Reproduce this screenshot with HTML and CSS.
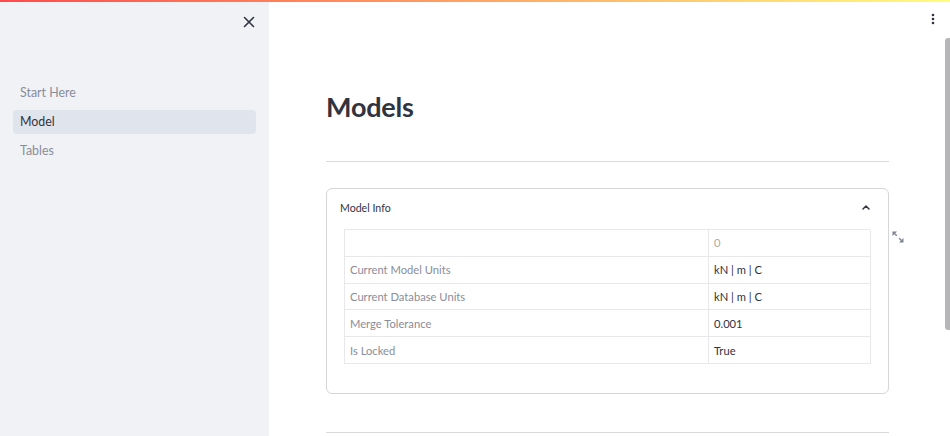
FILE: index.html
```html
<!DOCTYPE html>
<html>
<head>
<meta charset="utf-8">
<link rel="stylesheet" href="styles.css">
</head>
<body>
<div class="topbar"></div>
<div class="app">
  <aside class="sidebar">
    <div class="side-head">
      <svg class="close" width="12" height="12" viewBox="0 0 12 12"><path d="M1.5 1.5 L10.5 10.5 M10.5 1.5 L1.5 10.5" stroke="#31333f" stroke-width="1.6" stroke-linecap="round"/></svg>
    </div>
    <nav class="nav">
      <div class="nav-item">Start Here</div>
      <div class="nav-item active">Model</div>
      <div class="nav-item">Tables</div>
    </nav>
  </aside>
  <main class="main">
    <div class="menu-dots">
      <svg width="4" height="12" viewBox="0 0 4 12"><circle cx="2" cy="2" r="1.3" fill="#31333f"/><circle cx="2" cy="6" r="1.3" fill="#31333f"/><circle cx="2" cy="10" r="1.3" fill="#31333f"/></svg>
    </div>
    <div class="scrollbar"></div>
    <div class="content">
      <h1 class="title">Models</h1>
      <hr class="divider">
      <div class="expander">
        <div class="exp-head">
          <span class="exp-label">Model Info</span>
          <svg class="chev" width="10" height="7" viewBox="0 0 10 7"><path d="M2 5 L5 2 L8 5" stroke="#31333f" stroke-width="1.5" fill="none" stroke-linecap="round" stroke-linejoin="round"/></svg>
        </div>
        <div class="table-wrap">
          <div class="grid">
            <div class="cell head"></div><div class="cell head val0">0</div>
            <div class="cell key">Current Model Units</div><div class="cell val">kN | m | C</div>
            <div class="cell key">Current Database Units</div><div class="cell val">kN | m | C</div>
            <div class="cell key">Merge Tolerance</div><div class="cell val">0.001</div>
            <div class="cell key">Is Locked</div><div class="cell val">True</div>
          </div>
          <svg class="fullscreen" width="12" height="12" viewBox="0 0 12 12"><path d="M0.5 0.5 H5 L0.5 5 Z M11.5 11.5 H7 L11.5 7 Z" fill="#808495"/><path d="M2.5 2.5 L4.8 4.8 M7.2 7.2 L9.5 9.5" stroke="#808495" stroke-width="1.4"/></svg>
        </div>
      </div>
      <hr class="divider bottom">
    </div>
  </main>
</div>
</body>
</html>
```
FILE: styles.css
```css
* { box-sizing: border-box; }
html, body { margin: 0; padding: 0; height: 100%; }
body {
  font-family: "Lato", "Noto Sans", sans-serif;
  color: #31333f;
  background: #fff;
  overflow: hidden;
  position: relative;
}
.topbar {
  position: absolute;
  top: 0; left: 0; right: 0;
  height: 2px;
  background: linear-gradient(90deg, #ff4b4b, #fffd80);
  z-index: 5;
}
.app { display: flex; height: 436px; }
.sidebar {
  width: 269px;
  flex: none;
  background: #f0f2f6;
  padding: 0 13px;
}
.side-head {
  height: 42px;
  display: flex;
  justify-content: flex-end;
  align-items: center;
}
.close { margin-right: 1px; margin-top: 1px; }
.nav { margin-top: 39px; display: flex; flex-direction: column; gap: 5px; }
.nav-item {
  height: 24px;
  line-height: 24px;
  padding-left: 7px;
  font-size: 12.4px;
  color: #8a8d99;
  border-radius: 4px;
}
.nav-item.active { background: #e0e4ec; color: #31333f; }
.main { flex: 1; position: relative; }
.menu-dots { position: absolute; right: 15px; top: 13px; line-height: 0; }
.scrollbar {
  position: absolute;
  right: 0; top: 38px;
  width: 5px; height: 292px;
  background: #b6b6b8;
  border-radius: 3px 0 0 3px;
}
.content { width: 563px; margin-left: 57px; padding-top: 88px; }
.title {
  margin: 0;
  font-size: 27px;
  font-weight: 700;
  line-height: 38px;
  letter-spacing: -0.2px;
}
.divider { border: none; border-top: 1px solid #d9d9dc; margin: 35px 0 26px; }
.divider.bottom { margin: 38px 0 0; }
.expander {
  border: 1px solid #d5d6da;
  border-radius: 6px;
  padding: 0 18px 29px 17px;
}
.exp-head {
  height: 38px;
  display: flex;
  align-items: center;
  justify-content: space-between;
  margin-left: -4px;
  margin-right: -1px;
}
.exp-label { font-size: 10.6px; }
.chev { margin-top: -1px; }
.table-wrap { position: relative; margin-top: 2px; }
.grid {
  display: grid;
  grid-template-columns: 364px 162px;
  border-left: 1px solid #e8e8ec;
  border-top: 1px solid #e8e8ec;
}
.cell {
  height: 26.8px;
  border-right: 1px solid #e8e8ec;
  border-bottom: 1px solid #e8e8ec;
  padding-left: 5px;
  font-size: 11.2px;
  display: flex;
  align-items: center;
  white-space: nowrap;
  overflow: hidden;
}
.key { color: #8a8d99; }
.val { color: #31333f; }
.val0 { color: #b3a79a; }
.fullscreen { position: absolute; right: -34px; top: 2px; }
```
